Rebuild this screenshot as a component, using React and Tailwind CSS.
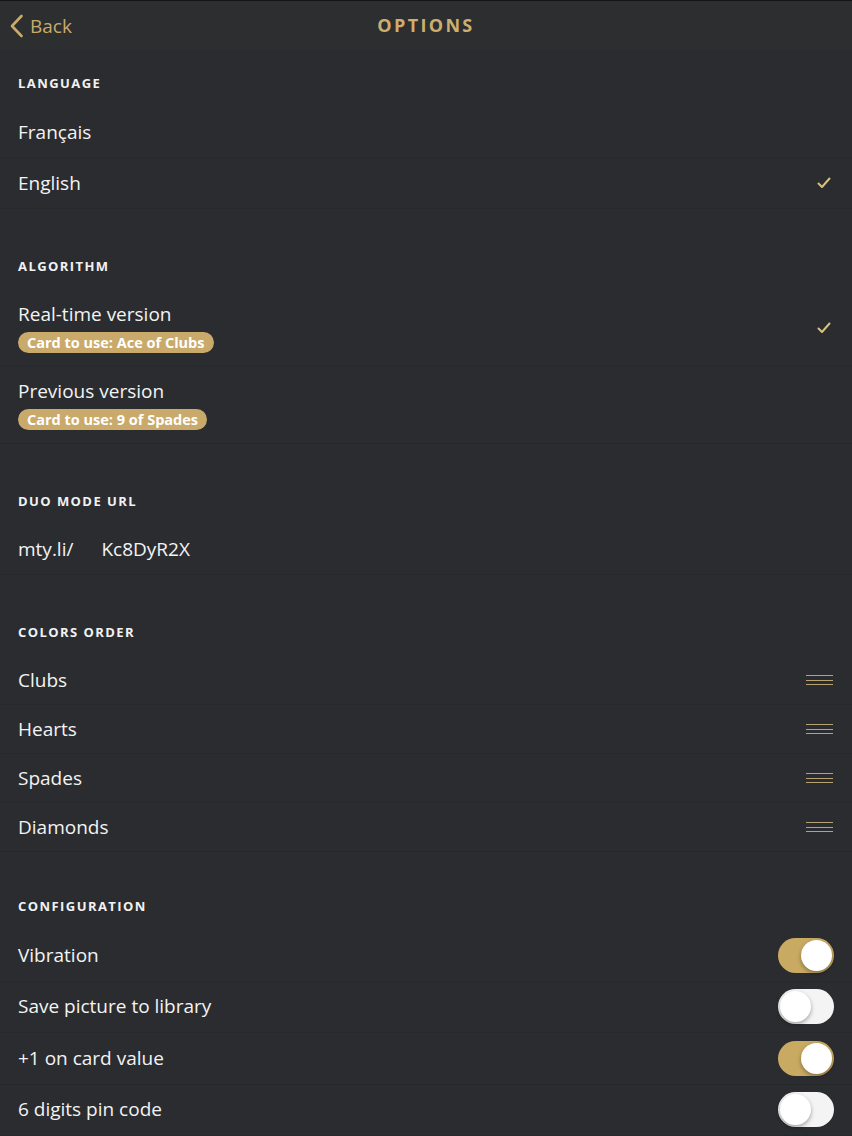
import React from 'react';

const gold = 'text-[#c9aa6b]';

const Section = ({ title, h = 'h-[81px]' }) => (
    <div className={`flex items-end px-[18px] pb-[16px] ${h}`}>
        <span className="text-[13px] leading-4 font-bold tracking-[0.11em] text-[#f2f2f2]">{title}</span>
    </div>
);

const Row = ({ h, children, right }) => (
    <div className={`flex items-center justify-between pl-[18px] pr-[18px] border-b border-[#27282c] ${h}`}>
        <div className="min-w-0">{children}</div>
        {right}
    </div>
);

const Check = () => (
    <svg width="14" height="12" viewBox="0 0 14 12" className="mr-[3px]">
        <path d="M1.5 6.5 L5 10 L12.5 1.5" fill="none" stroke="#d8c27e" strokeWidth="2" strokeLinecap="round" strokeLinejoin="round" />
    </svg>
);

const Handle = () => (
    <div className="flex flex-col gap-[3.5px] w-[27px] mr-[1px]">
        <div className="h-px bg-[#b7a274]"></div>
        <div className="h-px bg-[#b7a274]"></div>
        <div className="h-px bg-[#b7a274]"></div>
    </div>
);

const Toggle = ({ on }) => (
    <div className={`relative w-[56px] h-[35px] rounded-full ${on ? 'bg-[#c9aa62]' : 'bg-[#f4f4f4]'}`}>
        <div className={`absolute top-[2px] w-[31px] h-[31px] rounded-full bg-white shadow-[0_2px_4px_rgba(0,0,0,0.35)] ${on ? 'right-[2px]' : 'left-[2px]'}`}></div>
    </div>
);

const Badge = ({ children }) => (
    <span className="inline-block mt-[6px] px-[9px] rounded-full bg-[#c9aa6b] text-white text-[14.5px] leading-[21px] font-bold">
        {children}
    </span>
);

const label = 'text-[19px] leading-6 text-[#f3f3f3]';

export default function App() {
    return (
        <div className="w-[852px] h-[1136px] overflow-hidden bg-[#2b2c30] border-t border-[#141516]" style={{ fontFamily: '"Open Sans", "Noto Sans", sans-serif' }}>
            <div className="relative flex items-center justify-center h-[49px] bg-[#2c2e30]">
                <div className={`absolute left-[9px] top-0 h-full flex items-center gap-[6px] ${gold}`}>
                    <svg width="15" height="24" viewBox="0 0 15 24">
                        <path d="M12.5 2 L3 12 L12.5 22" fill="none" stroke="#c9aa6b" strokeWidth="2.6" strokeLinecap="round" strokeLinejoin="round" />
                    </svg>
                    <span className="text-[19px] leading-6">Back</span>
                </div>
                <span className="text-[18px] font-bold tracking-[0.13em] text-[#cdae6e]">OPTIONS</span>
            </div>

            <Section title="LANGUAGE" h="h-[57px]" />
            <Row h="h-[51px]"><span className={label}>Français</span></Row>
            <Row h="h-[51px]" right={<Check />}><span className={label}>English</span></Row>

            <Section title="ALGORITHM" />
            <Row h="h-[76px]" right={<Check />}>
                <div className={label}>Real-time version</div>
                <Badge>Card to use: Ace of Clubs</Badge>
            </Row>
            <Row h="h-[78px]">
                <div className={label}>Previous version</div>
                <Badge>Card to use: 9 of Spades</Badge>
            </Row>

            <Section title="DUO MODE URL" />
            <Row h="h-[50px]">
                <span className={label}>mty.li/</span>
                <span className={`${label} ml-[28px]`}>Kc8DyR2X</span>
            </Row>

            <Section title="COLORS ORDER" />
            {['Clubs', 'Hearts', 'Spades', 'Diamonds'].map((c) => (
                <Row key={c} h="h-[49px]" right={<Handle />}><span className={label}>{c}</span></Row>
            ))}

            <Section title="CONFIGURATION" h="h-[78px]" />
            <Row h="h-[51.5px]" right={<Toggle on />}><span className={label}>Vibration</span></Row>
            <Row h="h-[51.5px]" right={<Toggle />}><span className={label}>Save picture to library</span></Row>
            <Row h="h-[51.5px]" right={<Toggle on />}><span className={label}>+1 on card value</span></Row>
            <Row h="h-[51.5px]" right={<Toggle />}><span className={label}>6 digits pin code</span></Row>
        </div>
    );
}
